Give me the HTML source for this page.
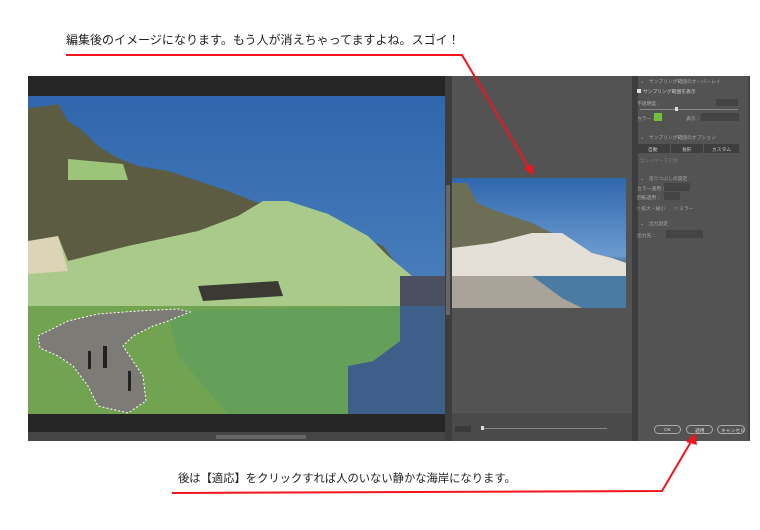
<!DOCTYPE html>
<html><head><meta charset="utf-8"><style>
*{margin:0;padding:0;box-sizing:border-box}
body{width:760px;height:530px;background:#fff;position:relative;overflow:hidden;font-family:"Liberation Sans","Noto Sans CJK JP",sans-serif;color:#222}
.a{position:absolute}
.t{font-size:8px;color:#aaa;white-space:nowrap;transform:scale(.6);transform-origin:0 0}
</style></head><body>
<div class="a" style="left:66px;top:31px;font-size:12px;letter-spacing:.02px;white-space:nowrap">編集後のイメージになります。もう人が消えちゃってますよね。スゴイ！</div>
<div class="a" style="left:178px;top:470px;font-size:11.3px;white-space:nowrap">後は【適応】をクリックすれば人のいない静かな海岸になります。</div>

<div class="a" style="left:28px;top:76px;width:722px;height:365px;background:#535353"></div>
<div class="a" style="left:28px;top:76px;width:417px;height:20px;background:#262626"></div>
<div class="a" style="left:28px;top:414px;width:417px;height:18px;background:#262626"></div>
<div class="a" style="left:28px;top:432px;width:417px;height:9px;background:#454545"></div>
<div class="a" style="left:216px;top:435px;width:90px;height:4px;background:#666"></div>
<div class="a" style="left:445px;top:76px;width:7px;height:365px;background:#3d3d3d"></div>
<div class="a" style="left:446px;top:185px;width:4px;height:130px;background:#666"></div>
<svg class="a" style="left:28px;top:96px" width="417" height="318" viewBox="0 0 417 318">
<defs><linearGradient id="sk" x1="0" y1="0" x2="0" y2="1"><stop offset="0" stop-color="#2f66ad"/><stop offset="1" stop-color="#5a8dc4"/></linearGradient></defs>
<rect width="417" height="318" fill="url(#sk)"/>
<polygon points="0,12 20,10 30,8 40,25 55,35 70,50 90,62 110,70 140,75 170,85 200,95 225,105 250,112 290,125 330,140 355,150 370,170 395,195 417,200 417,215 0,215" fill="#5b5c42"/>
<polygon points="0,150 30,140 40,165 100,150 170,135 210,120 235,105 260,105 300,118 340,140 360,160 372,170 390,185 395,205 395,215 0,215" fill="#a9ca8a"/>
<polygon points="40,63 95,68 100,84 40,84" fill="#9cc57a"/>
<polygon points="0,145 30,140 40,175 0,178" fill="#ddd3b5"/>
<polygon points="170,190 250,185 255,200 175,205" fill="#3a3a33"/>
<rect x="372" y="180" width="45" height="35" fill="#4a5060"/>
<rect x="0" y="210" width="417" height="108" fill="#3d5f8a"/>
<polygon points="0,210 372,210 372,245 345,265 320,270 320,318 0,318" fill="#72a350"/>
<polygon points="140,215 372,210 372,245 345,265 320,270 320,318 200,318 150,260" fill="#64a05a"/>
<polygon points="10,240 40,225 70,218 110,215 150,213 162,216 140,225 125,230 105,240 95,250 105,265 115,280 118,305 100,317 70,310 60,290 45,270 30,260 12,252" fill="#7d7b75" stroke="#fff" stroke-dasharray="2 2" stroke-width="1"/>
<g fill="#222"><rect x="60" y="255" width="3" height="18"/><rect x="75" y="250" width="4" height="22"/><rect x="100" y="275" width="3" height="20"/></g>
</svg>
<div class="a" style="left:452px;top:178px;width:174px;height:130px;background:linear-gradient(#2f67ae,#6c9bcf 60%,#5a84a8 62%,#3e6a94)"></div>
<svg class="a" style="left:452px;top:178px" width="174" height="130" viewBox="0 0 174 130">
<polygon points="0,5 15,5 25,25 50,35 80,45 100,55 120,65 140,75 160,80 174,85 174,98 0,98" fill="#6c6e55"/>
<polygon points="0,70 40,65 80,55 110,55 140,75 160,80 174,85 174,98 0,98" fill="#e4e0d8"/>
<polygon points="0,98 174,98 174,130 0,130" fill="#4a7ba3"/>
<polygon points="0,98 80,98 110,120 130,130 0,130" fill="#a9a39a"/>
</svg>
<div class="a" style="left:452px;top:413px;width:180px;height:28px;background:#4a4a4a"></div>
<div class="a" style="left:455px;top:426px;width:16px;height:6px;background:#3a3a3a"></div>
<div class="a" style="left:482px;top:428px;width:125px;height:1px;background:#888"></div>
<div class="a" style="left:481px;top:426px;width:3px;height:4px;background:#ddd"></div>
<div class="a" style="left:632px;top:76px;width:6px;height:365px;background:#3d3d3d"></div>
<div class="a" style="left:638px;top:76px;width:112px;height:365px;background:#535353"></div>
<div class="a" style="left:748px;top:76px;width:2px;height:365px;background:#444"></div>
<div class="a t" style="left:640px;top:78px">⌄　サンプリング範囲のオーバーレイ</div>
<div class="a" style="left:637px;top:89px;width:4px;height:4px;background:#ddd"></div>
<div class="a t" style="left:643px;top:88px;color:#ccc">サンプリング範囲を表示</div>
<div class="a t" style="left:637px;top:100px">不透明度：</div>
<div class="a" style="left:716px;top:99px;width:22px;height:7px;background:#444"></div>
<div class="a" style="left:640px;top:109px;width:98px;height:1px;background:#888"></div>
<div class="a" style="left:675px;top:107px;width:3px;height:4px;background:#ddd"></div>
<div class="a t" style="left:637px;top:115px">カラー：</div>
<div class="a" style="left:654px;top:113px;width:8px;height:8px;background:#6ec23a"></div>
<div class="a t" style="left:686px;top:115px">表示：</div>
<div class="a" style="left:701px;top:113px;width:38px;height:8px;background:#444"></div>
<div class="a t" style="left:640px;top:134px">⌄　サンプリング範囲のオプション</div>
<div class="a" style="left:637px;top:144px;width:102px;height:9px;background:#3e3e3e"></div>
<div class="a" style="left:670px;top:144px;width:1px;height:9px;background:#555"></div>
<div class="a" style="left:703px;top:144px;width:1px;height:9px;background:#555"></div>
<div class="a t" style="left:648px;top:146px;color:#ccc">自動</div>
<div class="a t" style="left:682px;top:146px;color:#ccc">長形</div>
<div class="a t" style="left:712px;top:146px;color:#ccc">カスタム</div>
<div class="a t" style="left:640px;top:157px;color:#777">全レイヤーを対象</div>
<div class="a t" style="left:640px;top:175px">⌄　塗りつぶしの設定</div>
<div class="a t" style="left:637px;top:185px">カラー適用：</div>
<div class="a" style="left:664px;top:183px;width:26px;height:8px;background:#444"></div>
<div class="a t" style="left:637px;top:194px">回転適用：</div>
<div class="a" style="left:664px;top:192px;width:16px;height:8px;background:#444"></div>
<div class="a t" style="left:637px;top:205px">□ 拡大・縮小　　□ ミラー</div>
<div class="a t" style="left:640px;top:220px">⌄　出力設定</div>
<div class="a t" style="left:637px;top:232px">出力先：</div>
<div class="a" style="left:666px;top:230px;width:37px;height:8px;background:#444"></div>
<div class="a" style="left:654px;top:425px;width:27px;height:9px;border:1px solid #aaa;border-radius:5px"></div>
<div class="a" style="left:686px;top:425px;width:27px;height:9px;border:1px solid #aaa;border-radius:5px"></div>
<div class="a" style="left:717px;top:425px;width:28px;height:9px;border:1px solid #aaa;border-radius:5px"></div>
<div class="a t" style="left:664px;top:427px;color:#ddd">OK</div>
<div class="a t" style="left:695px;top:427px;color:#ddd">適用</div>
<div class="a t" style="left:721px;top:427px;color:#ddd">キャンセル</div>
<svg class="a" style="left:0;top:0" width="760" height="530">
<polyline points="66,55 462,55 530,170" fill="none" stroke="#f0151d" stroke-width="2"/>
<polygon points="524,168 533,176 533,164" fill="#f0151d"/>
<polyline points="172,493 662,491 692,440" fill="none" stroke="#f0151d" stroke-width="2"/>
<polygon points="686,442 695,433 697,445" fill="#f0151d"/>
</svg>
</body></html>
